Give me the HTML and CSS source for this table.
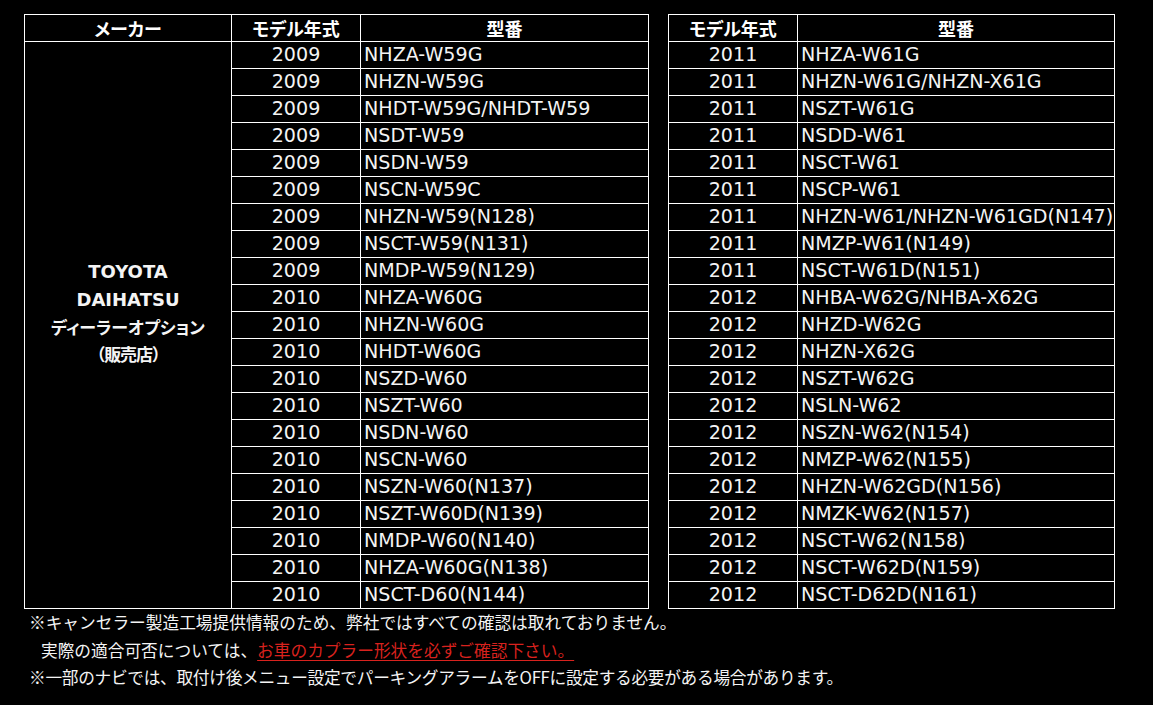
FILE: index.html
```html
<!DOCTYPE html>
<html lang="ja">
<head>
<meta charset="utf-8">
<title>適合表</title>
<link rel="stylesheet" href="styles.css">
</head>
<body>
<div class="page">
  <div class="tables">
    <table class="tbl tbl-left">
      <colgroup><col class="c-maker"><col class="c-year"><col class="c-model-l"></colgroup>
      <thead>
        <tr><th>メーカー</th><th>モデル年式</th><th>型番</th></tr>
      </thead>
      <tbody>
        <tr><td class="maker" rowspan="21"><span class="en">TOYOTA</span><br><span class="en">DAIHATSU</span><br>ディーラーオプション<br><span class="paren">（販売店）</span><br>&nbsp;</td><td class="year">2009</td><td class="model">NHZA-W59G</td></tr>
        <tr><td class="year">2009</td><td class="model">NHZN-W59G</td></tr>
        <tr><td class="year">2009</td><td class="model">NHDT-W59G/NHDT-W59</td></tr>
        <tr><td class="year">2009</td><td class="model">NSDT-W59</td></tr>
        <tr><td class="year">2009</td><td class="model">NSDN-W59</td></tr>
        <tr><td class="year">2009</td><td class="model">NSCN-W59C</td></tr>
        <tr><td class="year">2009</td><td class="model">NHZN-W59(N128)</td></tr>
        <tr><td class="year">2009</td><td class="model">NSCT-W59(N131)</td></tr>
        <tr><td class="year">2009</td><td class="model">NMDP-W59(N129)</td></tr>
        <tr><td class="year">2010</td><td class="model">NHZA-W60G</td></tr>
        <tr><td class="year">2010</td><td class="model">NHZN-W60G</td></tr>
        <tr><td class="year">2010</td><td class="model">NHDT-W60G</td></tr>
        <tr><td class="year">2010</td><td class="model">NSZD-W60</td></tr>
        <tr><td class="year">2010</td><td class="model">NSZT-W60</td></tr>
        <tr><td class="year">2010</td><td class="model">NSDN-W60</td></tr>
        <tr><td class="year">2010</td><td class="model">NSCN-W60</td></tr>
        <tr><td class="year">2010</td><td class="model">NSZN-W60(N137)</td></tr>
        <tr><td class="year">2010</td><td class="model">NSZT-W60D(N139)</td></tr>
        <tr><td class="year">2010</td><td class="model">NMDP-W60(N140)</td></tr>
        <tr><td class="year">2010</td><td class="model">NHZA-W60G(N138)</td></tr>
        <tr><td class="year">2010</td><td class="model">NSCT-D60(N144)</td></tr>
      </tbody>
    </table>
    <table class="tbl tbl-right">
      <colgroup><col class="c-year"><col class="c-model-r"></colgroup>
      <thead>
        <tr><th>モデル年式</th><th>型番</th></tr>
      </thead>
      <tbody>
        <tr><td class="year">2011</td><td class="model">NHZA-W61G</td></tr>
        <tr><td class="year">2011</td><td class="model">NHZN-W61G/NHZN-X61G</td></tr>
        <tr><td class="year">2011</td><td class="model">NSZT-W61G</td></tr>
        <tr><td class="year">2011</td><td class="model">NSDD-W61</td></tr>
        <tr><td class="year">2011</td><td class="model">NSCT-W61</td></tr>
        <tr><td class="year">2011</td><td class="model">NSCP-W61</td></tr>
        <tr><td class="year">2011</td><td class="model">NHZN-W61/NHZN-W61GD(N147)</td></tr>
        <tr><td class="year">2011</td><td class="model">NMZP-W61(N149)</td></tr>
        <tr><td class="year">2011</td><td class="model">NSCT-W61D(N151)</td></tr>
        <tr><td class="year">2012</td><td class="model">NHBA-W62G/NHBA-X62G</td></tr>
        <tr><td class="year">2012</td><td class="model">NHZD-W62G</td></tr>
        <tr><td class="year">2012</td><td class="model">NHZN-X62G</td></tr>
        <tr><td class="year">2012</td><td class="model">NSZT-W62G</td></tr>
        <tr><td class="year">2012</td><td class="model">NSLN-W62</td></tr>
        <tr><td class="year">2012</td><td class="model">NSZN-W62(N154)</td></tr>
        <tr><td class="year">2012</td><td class="model">NMZP-W62(N155)</td></tr>
        <tr><td class="year">2012</td><td class="model">NHZN-W62GD(N156)</td></tr>
        <tr><td class="year">2012</td><td class="model">NMZK-W62(N157)</td></tr>
        <tr><td class="year">2012</td><td class="model">NSCT-W62(N158)</td></tr>
        <tr><td class="year">2012</td><td class="model">NSCT-W62D(N159)</td></tr>
        <tr><td class="year">2012</td><td class="model">NSCT-D62D(N161)</td></tr>
      </tbody>
    </table>
  </div>
  <div class="notes">
    <p>※キャンセラー製造工場提供情報のため、弊社ではすべての確認は取れておりません。</p>
    <p class="indent">実際の適合可否については、<span class="warn">お車のカプラー形状を必ずご確認下さい。</span></p>
    <p class="tight">※一部のナビでは、取付け後メニュー設定でパーキングアラームをOFFに設定する必要がある場合があります。</p>
  </div>
</div>
</body>
</html>
```

FILE: styles.css
```css
html, body {
  margin: 0;
  padding: 0;
  background: #000;
  color: #fff;
}

body {
  font-family: "DejaVu Sans", "Noto Sans CJK JP", sans-serif;
}

.page {
  padding: 14px 0 0 24px;
}

.tables {
  display: flex;
  align-items: flex-start;
  gap: 19px;
}

.tbl {
  border-collapse: collapse;
  table-layout: fixed;
  background: #000;
}

.tbl-left { width: 624px; }
.tbl-right { width: 446px; }

.c-maker { width: 207px; }
.c-year { width: 129px; }
.c-model-l { width: 288px; }
.c-model-r { width: 317px; }

.tbl th,
.tbl td {
  border: 1px solid #fff;
  height: 26px;
  padding: 0;
  box-sizing: border-box;
  white-space: nowrap;
  overflow: visible;
}

.tbl th {
  font-family: "Noto Sans CJK JP", sans-serif;
  font-weight: 700;
  font-size: 18px;
  line-height: 26px;
  text-align: center;
  font-feature-settings: "palt";
}

.tbl td {
  font-size: 19.1px;
  line-height: 26px;
  color: #f4f4f4;
}

.tbl td.year {
  text-align: center;
}

.tbl td.model {
  text-align: left;
  padding-left: 3px;
}

.tbl td.maker {
  text-align: center;
  vertical-align: middle;
  font-family: "Noto Sans CJK JP", sans-serif;
  font-weight: 700;
  font-size: 17px;
  line-height: 27px;
  font-feature-settings: "palt";
}

.tbl td.maker .en {
  font-family: "DejaVu Sans", sans-serif;
  font-size: 18px;
}

.tbl td.maker .paren {
  font-feature-settings: normal;
  font-size: 17px;
  letter-spacing: -1.2px;
}

.notes {
  padding-left: 5px;
  font-family: "Noto Sans CJK JP", sans-serif;
  font-size: 16.7px;
  color: #f4f4f4;
}

.notes p {
  margin: 0;
  line-height: 27.5px;
  white-space: nowrap;
}

.notes p.tight {
  letter-spacing: -0.3px;
}

.notes p.indent {
  padding-left: 12px;
}

.warn {
  color: #d8221e;
  text-decoration: underline;
  text-decoration-thickness: 1px;
  text-underline-offset: 3px;
}
```
